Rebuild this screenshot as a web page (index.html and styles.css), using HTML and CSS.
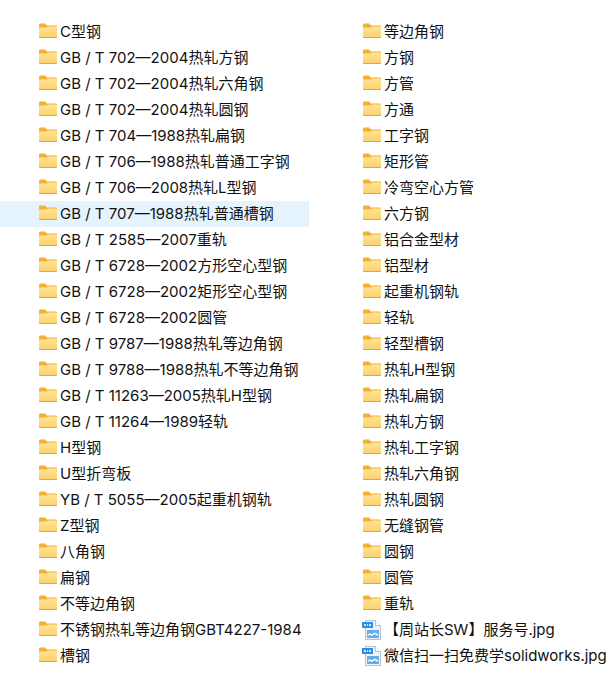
FILE: index.html
```html
<!DOCTYPE html>
<html lang="en">
<head>
  <meta charset="UTF-8">
  <title>型钢</title>
  <link rel="stylesheet" href="styles.css">
</head>
<body>

<svg class="defs" width="0" height="0">
  <defs>
    <linearGradient id="folderFill" x1="0" y1="0" x2="0" y2="1">
      <stop offset="0" stop-color="#ffe596"/>
      <stop offset="1" stop-color="#fcd068"/>
    </linearGradient>
    <symbol id="folder" viewBox="0 0 18 16">
      <path d="M0 2C0 1.2.6.6 1.4.6h4.6l2 2H17c.6 0 1 .4 1 1v2H0z" fill="#f5b02e"/>
      <path d="M0 4.5h7.5l1.5-1H17c.6 0 1 .4 1 1V14c0 .6-.4 1-1 1H1c-.6 0-1-.4-1-1z" fill="url(#folderFill)"/>
      <path d="M0 14h18v.2c0 .5-.4.8-1 .8H1c-.6 0-1-.3-1-.8z" fill="#eba52c"/>
    </symbol>
    <symbol id="jpg" viewBox="0 0 20 20">
      <path d="M3.5 .5h10l5 5v14h-15z" fill="#eef3f9" stroke="#b4c2d3"/>
      <path d="M13.5 .5v5h5" fill="#fff" stroke="#b4c2d3"/>
      <rect x="0" y="2" width="11" height="6" fill="#2f8fe0"/>
      <path d="M2 4h2v2H2zM5 4h1v2H5zM7 4h2v2H7z" fill="#cfe6fa"/>
      <rect x="5" y="10" width="12" height="8" fill="#63aeea"/>
      <path d="M6 15.5c2-3.5 3 1 5-1s3-1 5 1" fill="none" stroke="#fff" stroke-width="1.5"/>
    </symbol>
  </defs>
</svg>

<div class="columns">
  <ul class="fileList">
    <li><svg class="icon"><use href="#folder"/></svg>C型钢</li>
    <li><svg class="icon"><use href="#folder"/></svg>GB / T 702—2004热轧方钢</li>
    <li><svg class="icon"><use href="#folder"/></svg>GB / T 702—2004热轧六角钢</li>
    <li><svg class="icon"><use href="#folder"/></svg>GB / T 702—2004热轧圆钢</li>
    <li><svg class="icon"><use href="#folder"/></svg>GB / T 704—1988热轧扁钢</li>
    <li><svg class="icon"><use href="#folder"/></svg>GB / T 706—1988热轧普通工字钢</li>
    <li><svg class="icon"><use href="#folder"/></svg>GB / T 706—2008热轧L型钢</li>
    <li class="selected"><svg class="icon"><use href="#folder"/></svg>GB / T 707—1988热轧普通槽钢</li>
    <li><svg class="icon"><use href="#folder"/></svg>GB / T 2585—2007重轨</li>
    <li><svg class="icon"><use href="#folder"/></svg>GB / T 6728—2002方形空心型钢</li>
    <li><svg class="icon"><use href="#folder"/></svg>GB / T 6728—2002矩形空心型钢</li>
    <li><svg class="icon"><use href="#folder"/></svg>GB / T 6728—2002圆管</li>
    <li><svg class="icon"><use href="#folder"/></svg>GB / T 9787—1988热轧等边角钢</li>
    <li><svg class="icon"><use href="#folder"/></svg>GB / T 9788—1988热轧不等边角钢</li>
    <li><svg class="icon"><use href="#folder"/></svg>GB / T 11263—2005热轧H型钢</li>
    <li><svg class="icon"><use href="#folder"/></svg>GB / T 11264—1989轻轨</li>
    <li><svg class="icon"><use href="#folder"/></svg>H型钢</li>
    <li><svg class="icon"><use href="#folder"/></svg>U型折弯板</li>
    <li><svg class="icon"><use href="#folder"/></svg>YB / T 5055—2005起重机钢轨</li>
    <li><svg class="icon"><use href="#folder"/></svg>Z型钢</li>
    <li><svg class="icon"><use href="#folder"/></svg>八角钢</li>
    <li><svg class="icon"><use href="#folder"/></svg>扁钢</li>
    <li><svg class="icon"><use href="#folder"/></svg>不等边角钢</li>
    <li><svg class="icon"><use href="#folder"/></svg>不锈钢热轧等边角钢GBT4227-1984</li>
    <li><svg class="icon"><use href="#folder"/></svg>槽钢</li>
  </ul>
  <ul class="fileList">
    <li><svg class="icon"><use href="#folder"/></svg>等边角钢</li>
    <li><svg class="icon"><use href="#folder"/></svg>方钢</li>
    <li><svg class="icon"><use href="#folder"/></svg>方管</li>
    <li><svg class="icon"><use href="#folder"/></svg>方通</li>
    <li><svg class="icon"><use href="#folder"/></svg>工字钢</li>
    <li><svg class="icon"><use href="#folder"/></svg>矩形管</li>
    <li><svg class="icon"><use href="#folder"/></svg>冷弯空心方管</li>
    <li><svg class="icon"><use href="#folder"/></svg>六方钢</li>
    <li><svg class="icon"><use href="#folder"/></svg>铝合金型材</li>
    <li><svg class="icon"><use href="#folder"/></svg>铝型材</li>
    <li><svg class="icon"><use href="#folder"/></svg>起重机钢轨</li>
    <li><svg class="icon"><use href="#folder"/></svg>轻轨</li>
    <li><svg class="icon"><use href="#folder"/></svg>轻型槽钢</li>
    <li><svg class="icon"><use href="#folder"/></svg>热轧H型钢</li>
    <li><svg class="icon"><use href="#folder"/></svg>热轧扁钢</li>
    <li><svg class="icon"><use href="#folder"/></svg>热轧方钢</li>
    <li><svg class="icon"><use href="#folder"/></svg>热轧工字钢</li>
    <li><svg class="icon"><use href="#folder"/></svg>热轧六角钢</li>
    <li><svg class="icon"><use href="#folder"/></svg>热轧圆钢</li>
    <li><svg class="icon"><use href="#folder"/></svg>无缝钢管</li>
    <li><svg class="icon"><use href="#folder"/></svg>圆钢</li>
    <li><svg class="icon"><use href="#folder"/></svg>圆管</li>
    <li><svg class="icon"><use href="#folder"/></svg>重轨</li>
    <li><svg class="icon fileIcon"><use href="#jpg"/></svg>【周站长SW】服务号.jpg</li>
    <li><svg class="icon fileIcon"><use href="#jpg"/></svg>微信扫一扫免费学solidworks.jpg</li>
  </ul>
</div>

</body>
</html>
```

FILE: styles.css
```css
body {
  margin: 0;
  background-color: white;
  color: #111;
  font-family: "Inter", "Noto Sans CJK SC", sans-serif;
  font-size: 15px;
}

.defs {
  display: block;
}

.columns {
  display: grid;
  grid-template-columns: 309px 1fr;
  column-gap: 15px;
  padding-top: 19px;
}

.fileList {
  list-style: none;
  margin: 0;
  padding: 0;
}

.fileList li {
  display: flex;
  align-items: center;
  height: 26px;
  line-height: 24px;
  padding-left: 39px;
  white-space: nowrap;
}

.fileList li.selected {
  background-color: #e5f3ff;
}

.icon {
  flex: none;
  width: 18px;
  height: 16px;
  margin-right: 3px;
  margin-top: -2px;
}

.fileIcon {
  width: 20px;
  height: 20px;
  margin-left: -1px;
  margin-right: 2px;
  margin-top: -1px;
}
```
